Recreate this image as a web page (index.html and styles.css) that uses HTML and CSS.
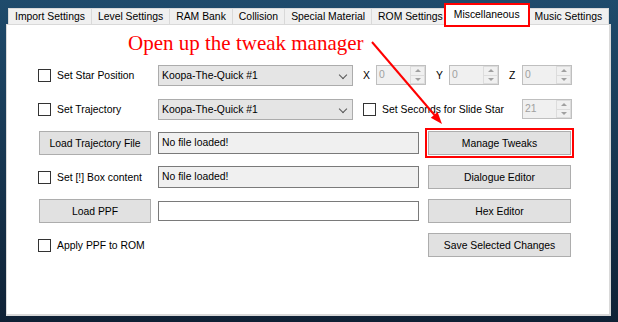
FILE: index.html
```html
<!DOCTYPE html>
<html lang="en">
  <head>
    <meta charset="UTF-8" />
    <meta name="viewport" content="width=device-width, initial-scale=1.0" />
    <title>Miscellaneous</title>
    <link rel="stylesheet" href="styles.css">
  </head>
  <body>
    <div class="window">
      <div class="tabs">
        <div class="tab">Import Settings</div>
        <div class="tab">Level Settings</div>
        <div class="tab">RAM Bank</div>
        <div class="tab">Collision</div>
        <div class="tab">Special Material</div>
        <div class="tab">ROM Settings</div>
        <div class="tab active">Miscellaneous</div>
        <div class="tab">Music Settings</div>
      </div>
      <div class="page">
        <div class="grid">
          <label class="check"><span class="box"></span>Set Star Position</label>
          <div class="wide">
            <div class="combo">Koopa-The-Quick #1<span class="chevron"></span></div>
            <span class="axis">X</span>
            <div class="spin"><span class="spin-value">0</span><span class="spin-btns"><span class="up"></span><span class="down"></span></span></div>
            <span class="axis">Y</span>
            <div class="spin"><span class="spin-value">0</span><span class="spin-btns"><span class="up"></span><span class="down"></span></span></div>
            <span class="axis">Z</span>
            <div class="spin"><span class="spin-value">0</span><span class="spin-btns"><span class="up"></span><span class="down"></span></span></div>
          </div>

          <label class="check"><span class="box"></span>Set Trajectory</label>
          <div class="wide">
            <div class="combo">Koopa-The-Quick #1<span class="chevron"></span></div>
            <label class="check"><span class="box"></span>Set Seconds for Slide Star</label>
            <div class="spin push"><span class="spin-value">21</span><span class="spin-btns"><span class="up"></span><span class="down"></span></span></div>
          </div>

          <button class="btn left">Load Trajectory File</button>
          <div class="field readonly">No file loaded!</div>
          <button class="btn right marked">Manage Tweaks</button>

          <label class="check"><span class="box"></span>Set [!] Box content</label>
          <div class="field readonly">No file loaded!</div>
          <button class="btn right">Dialogue Editor</button>

          <button class="btn left">Load PPF</button>
          <div class="field"></div>
          <button class="btn right">Hex Editor</button>

          <label class="check"><span class="box"></span>Apply PPF to ROM</label>
          <button class="btn right">Save Selected Changes</button>
        </div>
      </div>

      <div class="note">Open up the tweak manager</div>
      <svg class="arrow" width="618" height="322" viewBox="0 0 618 322">
        <line x1="372" y1="42" x2="434.5" y2="115" stroke="#f00" stroke-width="2" />
        <polygon points="442,124 430.8,117.8 437.6,112" fill="#f00" />
      </svg>
    </div>
  </body>
</html>
```

FILE: styles.css
```css
body {
  margin: 0;
  height: 322px;
  background: linear-gradient(to bottom, #1f4b6c, #0f2135);
  font-family: "Liberation Sans", Arial, sans-serif;
  font-size: 10.4px;
  color: #000;
  overflow: hidden;
}
.window {
  position: relative;
  width: 618px;
  height: 322px;
  padding-left: 6px;
  box-sizing: border-box;
}

/* tab strip */
.tabs {
  display: flex;
  align-items: flex-end;
  height: 24px;
  margin-left: 2px;
}
.tab {
  height: 16px;
  line-height: 15px;
  padding: 0 6px;
  background-color: #f0f0f0;
  border: 1px solid #d9d9d9;
  border-bottom: none;
  margin-right: -1px;
  box-sizing: border-box;
  white-space: nowrap;
}
.tab.active {
  position: relative;
  z-index: 2;
  height: 20px;
  line-height: 17px;
  margin: 0 0 -1px -3px;
  padding: 0 7px;
  background-color: #fff;
  border-color: #fff;
  outline: 2px solid #f00;
}

/* page body */
.page {
  width: 605px;
  height: 292px;
  box-sizing: border-box;
  background-color: #fff;
  border: 1px solid #d9d9d9;
  border-right-width: 2px;
  border-bottom-width: 2px;
  padding: 33px 0 0 31px;
}
.grid {
  display: grid;
  grid-template-columns: 113px 263px 144px;
  grid-auto-rows: 34px;
  column-gap: 7px;
  align-items: center;
}
.wide {
  grid-column: 2 / 4;
  display: flex;
  align-items: center;
}

.check {
  display: flex;
  align-items: center;
  gap: 6px;
  white-space: nowrap;
}
.box {
  width: 13px;
  height: 13px;
  box-sizing: border-box;
  border: 1px solid #333;
  background-color: #fff;
}
.wide .check {
  margin-left: 10px;
}

.combo {
  position: relative;
  width: 195px;
  height: 21px;
  line-height: 19px;
  box-sizing: border-box;
  padding-left: 3px;
  background-color: #e5e5e5;
  border: 1px solid #acacac;
}
.chevron {
  position: absolute;
  right: 6px;
  top: 6px;
  width: 5px;
  height: 5px;
  border-right: 1px solid #555;
  border-bottom: 1px solid #555;
  transform: rotate(45deg);
}

.axis {
  width: 13px;
  margin-left: 10px;
}
.spin {
  display: flex;
  width: 50px;
  height: 20px;
  box-sizing: border-box;
  border: 1px solid #bfbfbf;
  background-color: #f0f0f0;
}
.spin.push {
  margin-left: auto;
}
.spin-value {
  flex: 1;
  padding-left: 2px;
  line-height: 18px;
  color: #a0a0a0;
}
.spin-btns {
  display: flex;
  flex-direction: column;
  width: 15px;
}
.up,
.down {
  flex: 1;
  display: flex;
  align-items: center;
  justify-content: center;
  border: 1px solid #dcdcdc;
  background-color: #f0f0f0;
}
.down {
  border-top: none;
}
.up::after,
.down::after {
  content: "";
  border-left: 3px solid transparent;
  border-right: 3px solid transparent;
}
.up::after {
  border-bottom: 3px solid #a0a0a0;
}
.down::after {
  border-top: 3px solid #a0a0a0;
}

.btn {
  height: 24px;
  padding: 0;
  font-family: inherit;
  font-size: inherit;
  font-weight: normal;
  color: #000;
  background-color: #e1e1e1;
  border: 1px solid #adadad;
}
.btn.left {
  width: 112px;
  justify-self: end;
}
.btn.right {
  grid-column: 3;
  width: 143px;
}
.btn.marked {
  outline: 2px solid #f00;
  outline-offset: 1px;
}

.field {
  width: 261px;
  height: 20px;
  line-height: 18px;
  box-sizing: border-box;
  padding-left: 3px;
  border: 1px solid #7a7a7a;
  background-color: #fff;
}
.field.readonly {
  height: 22px;
  line-height: 20px;
  background-color: #f0f0f0;
}

/* annotation over the screenshot */
.note {
  position: absolute;
  left: 128px;
  top: 33px;
  font-family: "Liberation Serif", "Times New Roman", serif;
  font-size: 21px;
  line-height: 21px;
  color: #f00;
  white-space: nowrap;
}
.arrow {
  position: absolute;
  left: 0;
  top: 0;
  pointer-events: none;
}
```
